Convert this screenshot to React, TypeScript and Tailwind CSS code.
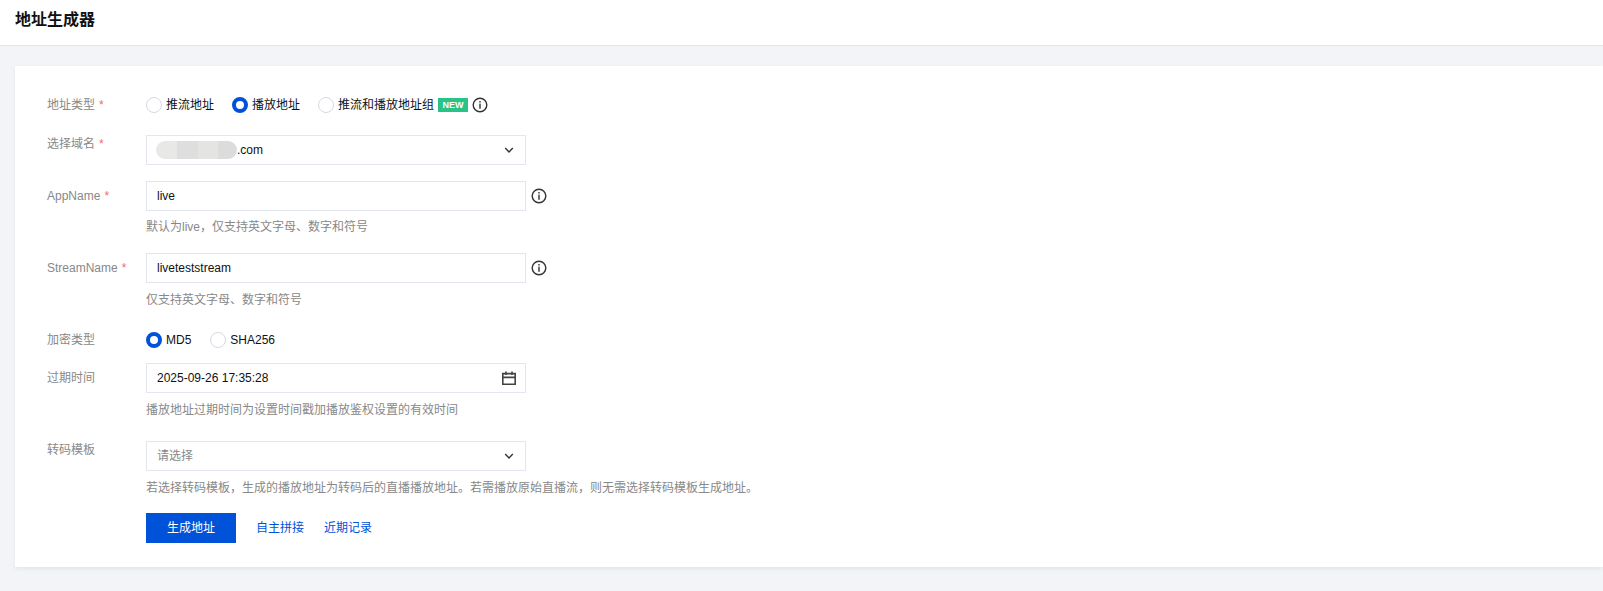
import type { ReactNode } from 'react';

function Info({ className = '' }: { className?: string }) {
  return (
    <svg className={`shrink-0 ${className}`} width="16" height="16" viewBox="0 0 16 16" fill="none">
      <circle cx="8" cy="8" r="6.8" stroke="#333" strokeWidth="1.4" />
      <rect x="7.3" y="4" width="1.4" height="1.5" fill="#333" />
      <rect x="7.3" y="6.6" width="1.4" height="5.2" fill="#333" />
    </svg>
  );
}

function Chevron() {
  return (
    <svg width="12" height="12" viewBox="0 0 12 12" fill="none">
      <path d="M2.2 4l3.8 3.9L9.8 4" stroke="#333" strokeWidth="1.4" />
    </svg>
  );
}

function CalendarIcon() {
  return (
    <svg className="-mr-[2px]" width="16" height="16" viewBox="0 0 16 16" fill="none">
      <path d="M1.8 3.6h12.4v10.6H1.8zM1.8 7.4h12.4M5 1.6v3.4M11 1.6v3.4" stroke="#444" strokeWidth="1.6" />
    </svg>
  );
}

function Radio({ label, checked = false, gap = 'mr-[20px]' }: { label: string; checked?: boolean; gap?: string }) {
  return (
    <label className={`flex items-center h-[16px] ${gap}`}>
      <span
        className={
          checked
            ? 'w-[16px] h-[16px] rounded-full border-[4px] border-[#0052d9] bg-white'
            : 'w-[16px] h-[16px] rounded-full border border-[#d5d9e4] bg-white'
        }
      />
      <span className="ml-[4px] text-[#111] text-[12px] leading-[16px]">{label}</span>
    </label>
  );
}

function Row({
  label,
  required,
  labelClass = '',
  className = '',
  children,
}: {
  label: string;
  required?: boolean;
  labelClass?: string;
  className?: string;
  children: ReactNode;
}) {
  return (
    <div className={`flex ${className}`}>
      <div className={`w-[99px] shrink-0 text-[12px] leading-[16px] text-[#888] ${labelClass}`}>
        {label}
        {required && <span className="ml-[4px] text-[#f06a6a]">*</span>}
      </div>
      {children}
    </div>
  );
}

function Field({ children }: { children: ReactNode }) {
  return (
    <div className="flex items-center justify-between w-[380px] h-[30px] border border-[#e3e6ef] bg-white pl-[10px] pr-[10px] text-[12px] text-[#111]">
      {children}
    </div>
  );
}

function Help({ children, className = 'mt-[6px]' }: { children: ReactNode; className?: string }) {
  return <div className={`ml-[99px] text-[12px] leading-[20px] text-[#888] ${className}`}>{children}</div>;
}

export default function App() {
  return (
    <div
      className="min-h-[591px] overflow-hidden bg-[#f2f4f8]"
      style={{ fontFamily: '"Liberation Sans", "Noto Sans CJK SC", sans-serif' }}
    >
      <header className="flex items-center h-[46px] pb-[6px] pl-[15px] bg-white border-b border-[#e2e5ea]">
        <h1 className="text-[16px] font-bold text-[#111]">地址生成器</h1>
      </header>

      <main className="mt-[20px] ml-[15px] pl-[32px] pt-[31px] pb-[24px] bg-white shadow-[0_2px_4px_rgba(54,58,80,0.08)]">
        <Row label="地址类型" required>
          <div className="flex items-center">
            <Radio label="推流地址" gap="mr-[18px]" />
            <Radio label="播放地址" checked gap="mr-[18px]" />
            <Radio label="推流和播放地址组" gap="mr-[4px]" />
            <span className="w-[30px] h-[14px] bg-[#29c287] text-white text-[9px] font-bold leading-[14px] text-center">
              NEW
            </span>
            <Info className="ml-[4px]" />
          </div>
        </Row>

        <Row label="选择域名" required labelClass="pt-[1px]" className="mt-[22px]">
          <Field>
            <span className="flex items-center">
              <span className="flex h-[18px] -ml-[1px] overflow-hidden rounded-full">
                <span className="w-[21px] bg-[#e8e8e6]" />
                <span className="w-[21px] bg-[#dedede]" />
                <span className="w-[20px] bg-[#e4e4e2]" />
                <span className="w-[19px] bg-[#dcdcdc]" />
              </span>
              <span>.com</span>
            </span>
            <Chevron />
          </Field>
        </Row>

        <Row label="AppName" required labelClass="pt-[7px]" className="mt-[16px]">
          <Field>live</Field>
          <Info className="ml-[5px] mt-[7px]" />
        </Row>
        <Help>默认为live，仅支持英文字母、数字和符号</Help>

        <Row label="StreamName" required labelClass="pt-[7px]" className="mt-[16px]">
          <Field>liveteststream</Field>
          <Info className="ml-[5px] mt-[7px]" />
        </Row>
        <Help className="mt-[7px]">仅支持英文字母、数字和符号</Help>

        <Row label="加密类型" className="mt-[22px]">
          <div className="flex items-center">
            <Radio label="MD5" checked gap="mr-[19px]" />
            <Radio label="SHA256" />
          </div>
        </Row>

        <Row label="过期时间" labelClass="pt-[7px]" className="mt-[15px]">
          <Field>
            2025-09-26 17:35:28
            <CalendarIcon />
          </Field>
        </Row>
        <Help className="mt-[7px]">播放地址过期时间为设置时间戳加播放鉴权设置的有效时间</Help>

        <Row label="转码模板" labelClass="pt-[1px]" className="mt-[21px]">
          <Field>
            <span className="text-[#888]">请选择</span>
            <Chevron />
          </Field>
        </Row>
        <Help className="mt-[7px]">若选择转码模板，生成的播放地址为转码后的直播播放地址。若需播放原始直播流，则无需选择转码模板生成地址。</Help>

        <div className="flex items-center mt-[15px] ml-[99px] text-[12px]">
          <button className="w-[90px] h-[30px] bg-[#0052d9] text-white">生成地址</button>
          <a className="ml-[20px] text-[#0052d9]">自主拼接</a>
          <a className="ml-[20px] text-[#0052d9]">近期记录</a>
        </div>
      </main>
    </div>
  );
}
